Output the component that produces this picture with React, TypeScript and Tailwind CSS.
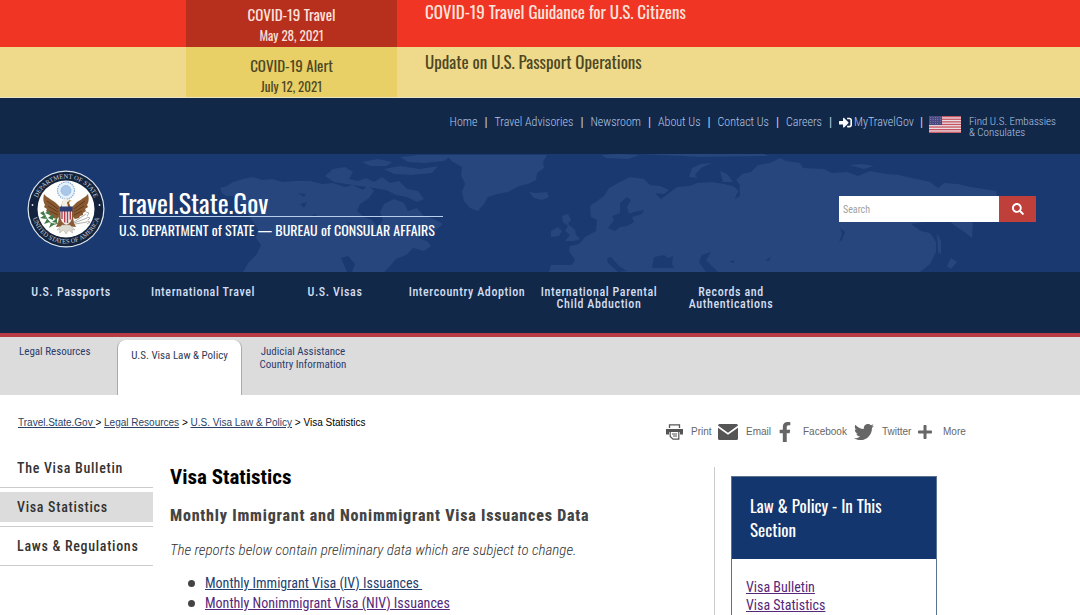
import clsx from "clsx"
import { FaSearch, FaSignInAlt, FaFacebookF, FaTwitter, FaPlus } from "react-icons/fa"

const alerts = [
  { label: "COVID-19 Travel", date: "May 28, 2021", title: "COVID-19 Travel Guidance for U.S. Citizens" },
  { label: "COVID-19 Alert", date: "July 12, 2021", title: "Update on U.S. Passport Operations" },
]

const utilityLinks = ["Home", "Travel Advisories", "Newsroom", "About Us", "Contact Us", "Careers"]

const mainNav = [
  "U.S. Passports",
  "International Travel",
  "U.S. Visas",
  "Intercountry Adoption",
  "International Parental Child Abduction",
  "Records and Authentications",
]

const sideNav = [
  { name: "The Visa Bulletin", active: false },
  { name: "Visa Statistics", active: true },
  { name: "Laws & Regulations", active: false },
]

const reports = [
  { name: "Monthly Immigrant Visa (IV) Issuances\u00a0", className: "text-[#24416f]" },
  { name: "Monthly Nonimmigrant Visa (NIV) Issuances", className: "text-[#55287a]" },
]

function Flag() {
  return (
    <svg viewBox="0 0 32 17" className="h-[17px] w-8" aria-hidden="true">
      <rect width="32" height="17" fill="#e9dfe6" />
      {[0, 1, 2, 3, 4, 5, 6].map((i) => (
        <rect key={i} y={i * 2.6} width="32" height="1.3" fill="#c8545f" />
      ))}
      <rect width="13" height="9" fill="#4a4a80" />
      {[0, 1, 2, 3].map((row) =>
        [0, 1, 2, 3, 4].map((col) => (
          <circle key={`${row}-${col}`} cx={1.6 + col * 2.4} cy={1.4 + row * 2.1} r="0.4" fill="#b9b8d6" />
        )),
      )}
    </svg>
  )
}

function Seal() {
  return (
    <svg viewBox="0 0 78 78" className="h-[78px] w-[78px] shrink-0" role="img" aria-label="Department of State seal">
      <defs>
        <path id="seal-top" d="M8.500 39a30.500 30.500 0 0 1 61 0" />
        <path id="seal-bottom" d="M4.500 39a34.500 34.500 0 0 0 69 0" />
      </defs>
      <circle cx="39" cy="39" r="38.500" fill="#dfe8ef" />
      <circle cx="39" cy="39" r="37.300" fill="#14233d" />
      <circle cx="39" cy="39" r="28.500" fill="#fdfdfb" />
      <g fill="#c9d1da" fontSize="6.500" fontFamily="Liberation Serif, serif">
        <text textAnchor="middle">
          <textPath href="#seal-top" startOffset="50%">DEPARTMENT OF STATE</textPath>
        </text>
        <text textAnchor="middle">
          <textPath href="#seal-bottom" startOffset="50%">UNITED STATES OF AMERICA</textPath>
        </text>
      </g>
      <circle cx="5.500" cy="35" r="0.900" fill="#dfe8ef" />
      <circle cx="72.500" cy="35" r="0.900" fill="#dfe8ef" />
      {/* glory */}
      <circle cx="39" cy="20.500" r="8.500" fill="#e8f1fa" stroke="#8bb2dc" strokeWidth="1.200" strokeDasharray="1.500 0.800" />
      <circle cx="39" cy="20.500" r="5" fill="#a9c8e8" stroke="#6f9fd2" strokeWidth="0.800" strokeDasharray="1 0.700" />
      {/* eagle */}
      <path
        d="M17 24C20 28 26 30 30 34L34 38L35 33C35 31 37 29 40 29L43 31L42 33L44 38L48 34C52 30 58 28 61 24C62 28 62 32 60 35L61 37L58 39L59 41L56 43L56 45L53 46L52 48L48 49L46 47L47 53L49 57L39 56L29 57L31 53L32 47L30 49L26 48L25 46L22 45L22 43L19 41L20 39L17 37L18 35C16 32 16 28 17 24Z"
        fill="#8a5a33"
      />
      <path d="M20 31l11 8M21 36l10 6M23 41l8 4M58 31l-11 8M57 36l-10 6M55 41l-8 4" stroke="#543217" strokeWidth="0.800" />
      <path d="M35 34c0-4 2-6 5-5l3 2-3 1 1 5h-6z" fill="#f3efe4" />
      <path d="M42 29.500l3 1.500-3 .6z" fill="#d7a236" />
      <path d="M33.500 38h11.500v9c0 4-3 7-5.700 8-2.800-1-5.800-4-5.800-8z" fill="#ece7e8" />
      <path d="M35 41v8M37.700 41v11.500M40.500 41v12M43.300 41v8.500" stroke="#b23b4b" strokeWidth="1.300" />
      <path d="M33 36.500h12.500v5h-12.500z" fill="#2c3d74" />
      {/* tail feathers */}
      <path d="M35 55l-5 5 3-.5-.5 3.500 4-3 2.500 4 2.500-4 4 3-.5-3.500 3 .5-5-5z" fill="#dedbd3" stroke="#aaa69c" strokeWidth="0.500" />
      {/* olive branch and arrows */}
      <path d="M31 53c-5 3-10 0-14-10" fill="none" stroke="#3f6f45" strokeWidth="1" />
      <path
        d="M17 41l-4 2 4 3zM18 45l-5 3 6 1zM20 49l-3 5 6-2zM24 53l-2 5 6-4zM18 43l5-3 0 5zM21 48l5-4 0 6zM25 52l5-4 0 5z"
        fill="#3f7a4a"
      />
      <path d="M47 52l12-8M47 53l13-5M48 54l12-2M59 42l3 1-2 3M60 47l3 1-2 2M60 51l3 1-3 2" stroke="#a9aaa8" strokeWidth="0.900" fill="none" />
    </svg>
  )
}

function WorldMap() {
  return (
    <svg
      viewBox="0 0 1080 118"
      preserveAspectRatio="xMidYMid slice"
      className="absolute inset-0 h-full w-full"
      aria-hidden="true"
    >
      <g fill="#27467d">
        {/* North America */}
        <path d="M220 34L227 32L233 28L243 25L253 23L262 26L272 25L283 28L296 27L310 27L322 30L333 29L345 33L353 31L363 36L368 31L374 37L369 44L360 50L357 57L364 63L372 66L378 73L383 66L380 58L384 50L394 45L404 49L408 57L417 54L424 62L434 65L443 70L436 76L425 79L418 84L427 87L431 92L424 97L413 94L406 101L396 105L390 112L384 118L352 118L355 110L348 102L341 104L347 118L243 118L249 108L257 100L261 91L256 84L258 75L252 66L246 57L241 48L234 42L226 42L222 39Z" />
        <path d="M325 22L333 15L345 13L353 18L349 25L358 27L366 24L374 28L382 23L390 29L399 27L407 35L418 37L424 45L417 48L407 43L396 41L386 36L374 34L360 32L346 30L334 28Z" />
        <path d="M362 8L378 5L392 8L386 12L370 12ZM400 3L418 1L452 1L444 7L424 9L408 8ZM384 15L400 12L420 15L438 12L432 19L412 21L394 20Z" />
        {/* Greenland */}
        <path d="M446 1L547 1L543 8L544 14L537 19L536 26L528 30L519 32L508 38L497 40L488 43L484 50L478 57L470 54L464 47L462 38L465 30L461 21L462 13L453 8Z" />
        <path d="M529 38L536 39L547 38L549 43L542 46L534 44ZM601 1L618 0L640 1L628 5L606 4ZM640 0L764 0L768 2L700 3Z" />
        {/* British Isles */}
        <path d="M562 62L568 60L571 66L568 70L575 76L576 81L580 85L574 87L565 87L570 81L565 77L568 72L563 68ZM551 77L558 73L562 77L559 82L551 83Z" />
        {/* Eurasia */}
        <path d="M549 118L551 111L572 111L575 106L569 97L570 92L579 90L585 83L596 77L597 66L591 63L590 52L597 47L604 42L609 34L618 29L630 23L644 25L650 31L660 32L669 36L664 40L655 39L661 45L669 39L677 33L690 32L697 29L712 28L724 30L733 32L739 37L740 31L736 26L742 20L751 18L758 11L770 9L780 4L786 7L800 9L803 14L824 15L832 19L847 18L858 22L870 17L886 20L899 21L912 24L930 28L938 34L944 29L958 30L970 33L984 35L996 37L997 42L988 46L990 62L973 67L972 84L963 77L954 71L946 65L926 68L911 70L921 77L930 79L936 88L936 98L930 110L920 118Z" />
        <path d="M689 23L692 14L701 10L712 9L701 14L695 21L698 24ZM723 28L720 17L727 20L733 28ZM849 11L862 10L874 12L864 15ZM937 79L941 87L941 100L938 98ZM951 104L957 108L951 115L947 112Z" />
      </g>
      {/* seas and lakes */}
      <g fill="#1b3a72">
        <path d="M620 49L627 43L631 46L627 53L629 60L634 58L644 56L642 60L632 63L634 68L627 72L620 73L615 77L608 74L614 66L612 62L620 59Z" />
        <path d="M607 104L611 103L619 112L627 117L618 118L608 109ZM654 103L664 101L668 104L673 102L672 110L674 114L652 114ZM702 101L711 98L706 106L712 112L718 118L706 118L699 108ZM729 108l5-2 0 3zM765 106l6-3-2 4zM840 74L845 78L842 86L839 88L842 80Z" />
        <path d="M300 50l7-2-3 6zM298 39l8 1-2 3zM312 61l5-1-3 4zM346 67l7 4-3 2zM736 41l4-6 0 7-5 3z" />
      </g>
    </svg>
  )
}

function PrintIcon() {
  return (
    <svg viewBox="0 0 17 16" className="h-4 w-[17px]" fill="none" stroke="#555" aria-hidden="true">
      <path d="M3.500 4V.8h10V4" strokeWidth="1.300" />
      <path d="M0 5h17v5.500h-3V8H3v2.500H0z" fill="#555" stroke="none" />
      <path d="M4.200 7.500h8.600v7.700H7L4.200 12.500z" strokeWidth="1.200" fill="#fff" />
      <path d="M6 10h5M7 12h4" strokeWidth="1" />
    </svg>
  )
}

function EmailIcon() {
  return (
    <svg viewBox="0 0 20 16" className="h-4 w-5" fill="#555" aria-hidden="true">
      <path d="M1.500 0h17A1.500 1.500 0 0 1 20 1.500L10 8.800 0 1.500A1.500 1.500 0 0 1 1.500 0z" />
      <path d="M0 3.800l10 7 10-7v10.700a1.500 1.500 0 0 1-1.500 1.500h-17A1.500 1.500 0 0 1 0 14.500z" />
    </svg>
  )
}

const shareLinks = [
  { name: "Print", icon: <PrintIcon />, className: "w-[52px] gap-2" },
  { name: "Email", icon: <EmailIcon />, className: "w-[59px] gap-2" },
  { name: "Facebook", icon: <FaFacebookF className="h-5 w-4" />, className: "w-[77px] gap-[10px]" },
  { name: "Twitter", icon: <FaTwitter className="h-5 w-5" />, className: "w-[63px] gap-2" },
  { name: "More", icon: <FaPlus className="h-4 w-4" />, className: "w-[52px] gap-[10px]" },
]

export default function App() {
  return (
    <div className="h-screen overflow-hidden bg-white font-['Roboto_Condensed','Liberation_Sans_Narrow',sans-serif] text-[#444]">
      {/* Alerts */}
      {alerts.map((alert, i) => (
        <div
          key={alert.label}
          className={clsx(
            "flex font-['Oswald','Roboto_Condensed','Liberation_Sans_Narrow',sans-serif]",
            i === 0 ? "bg-[#f03524] text-[#fbe3dc]" : "border-b border-[#e9e2c4] bg-[#efda8b] text-[#4d4723]",
          )}
        >
          <div
            className={clsx(
              "ml-[186px] w-[211px] text-center",
              i === 0 ? "bg-[#b72f1d] pt-[3px] pb-[2px]" : "bg-[#e8cf66] pt-[7px] pb-px",
            )}
          >
            <p className="text-[15px] leading-[23px]">{alert.label}</p>
            <p className="text-[13px] leading-[19px]">{alert.date}</p>
          </div>
          <a href="#" className={clsx("pl-7 text-[17px] leading-[23px]", i === 1 && "pt-[3px]")}>
            {alert.title}
          </a>
        </div>
      ))}

      {/* Utility links */}
      <div className="flex h-14 items-start justify-end bg-[#112849] pt-4 pr-6 text-xs leading-4 font-light text-[#b4c6e4]">
        {utilityLinks.map((name) => (
          <span key={name} className="flex">
            <a href="#">{name}</a>
            <span className="mx-[7px] font-bold">|</span>
          </span>
        ))}
        <a href="#" className="flex items-center gap-[2px]">
          <FaSignInAlt className="h-[13px] w-[13px] text-white" />
          MyTravelGov
        </a>
        <span className="mx-[6px] font-bold">|</span>
        <a href="#" className="flex items-start gap-2 pt-[2px] text-[11px] leading-[11px]">
          <Flag />
          <span>
            Find U.S. Embassies
            <br />& Consulates
          </span>
        </a>
      </div>

      {/* Banner */}
      <header className="relative flex h-[118px] items-center justify-between bg-[#1a3970] pr-11 pb-2 pl-[27px]">
        <WorldMap />
        <a href="#" className="relative flex items-center gap-[14px] font-['Oswald','Roboto_Condensed','Liberation_Sans_Narrow',sans-serif] text-white">
          <Seal />
          <span className="block w-[324px] pt-[14px]">
            <span className="block border-b border-[#b9cdec] text-[26px] leading-[26px]">Travel.State.Gov</span>
            <span className="block text-sm leading-[26px] whitespace-nowrap">
              U.S. DEPARTMENT of STATE — BUREAU of CONSULAR AFFAIRS
            </span>
          </span>
        </a>
        <form className="relative flex h-[26px]">
          <input
            aria-label="Search"
            placeholder="Search"
            className="w-40 bg-white px-1 text-[10px] text-[#333] placeholder:text-[#a0a0a0]"
          />
          <button type="button" aria-label="Submit search" className="flex w-[37px] items-center justify-center bg-[#bf3f3a] text-white">
            <FaSearch className="h-3 w-3" />
          </button>
        </form>
      </header>

      {/* Main navigation */}
      <nav className="flex h-[65px] border-b-4 border-[#b63b42] bg-[#112849] pt-[14px] pl-[5px]">
        {mainNav.map((name) => (
          <a key={name} href="#" className="w-[132px] px-1 text-center text-xs leading-3 font-medium tracking-wider text-[#d3def0]">
            {name}
          </a>
        ))}
      </nav>

      {/* Section tabs */}
      <nav className="flex h-[58px] bg-[#dcdcdc] text-[11px] leading-[13px] text-[#2d3b6b]">
        <a href="#" className="w-[117px] pt-2 pl-[19px]">Legal Resources</a>
        <a href="#" className="mt-[3px] w-[125px] rounded-t-lg border-x border-[#aaa] bg-white pt-[9px] text-center text-[#333a55]">
          U.S. Visa Law & Policy
        </a>
        <a href="#" className="w-[122px] px-3 pt-2 text-center">Judicial Assistance Country Information</a>
      </nav>

      {/* Breadcrumb and sharing */}
      <div className="flex h-[54px] items-start pt-[22px] pl-[18px] font-['Liberation_Sans',sans-serif] text-[10px] leading-3">
        <p className="w-[648px] text-black">
          <a href="#" className="text-[#2c3f66] underline">Travel.State.Gov </a>
          {" > "}
          <a href="#" className="text-[#2c3f66] underline">Legal Resources</a>
          {" > "}
          <a href="#" className="text-[#2c3f66] underline">U.S. Visa Law & Policy</a>
          {" > Visa Statistics"}
        </p>
        <div className="flex h-[30px] items-center text-[#666]">
          {shareLinks.map((link) => (
            <a key={link.name} href="#" className={clsx("flex items-center", link.className)}>
              {link.icon}
              {link.name}
            </a>
          ))}
        </div>
      </div>

      <div className="flex">
        {/* Side navigation */}
        <nav className="w-[153px] shrink-0 text-sm leading-5 font-medium tracking-wider text-[#333]">
          {sideNav.map((item) => (
            <div key={item.name} className="border-b border-[#ccc] py-1">
              <a href="#" className={clsx("block py-[5px] pl-[17px] whitespace-nowrap", item.active && "bg-[#dcdcdc]")}>
                {item.name}
              </a>
            </div>
          ))}
        </nav>

        {/* Content */}
        <main className="w-[561px] pt-[14px] pl-[17px]">
          <h1 className="text-[21px] leading-7 font-bold text-black">Visa Statistics</h1>
          <h2 className="mt-[13px] text-base leading-6 font-extrabold tracking-wider">
            Monthly Immigrant and Nonimmigrant Visa Issuances Data
          </h2>
          <p className="mt-3 text-[15px] leading-5 font-light text-[#333] italic">
            The reports below contain preliminary data which are subject to change.
          </p>
          <ul className="mt-[13px] pl-[18px] text-sm leading-5">
            {reports.map((report) => (
              <li key={report.name} className="flex items-center gap-[10px]">
                <span className="h-[7px] w-[7px] rounded-full bg-[#444]" />
                <a href="#" className={clsx("underline", report.className)}>{report.name}</a>
              </li>
            ))}
          </ul>
        </main>

        <aside className="mt-[18px] border-l border-[#ccc] pt-[9px] pl-4">
          <div className="w-[206px] border border-[#5b7290]">
            <h2 className="bg-[#13366f] px-[18px] py-[17px] font-['Oswald','Roboto_Condensed','Liberation_Sans_Narrow',sans-serif] text-[17px] leading-6 text-white">
              Law & Policy - In This Section
            </h2>
            <div className="flex flex-col items-start px-[14px] pt-[19px] pb-6 text-sm leading-[18px] text-[#55287a]">
              <a href="#" className="underline">Visa Bulletin</a>
              <a href="#" className="underline">Visa Statistics</a>
            </div>
          </div>
        </aside>
      </div>
    </div>
  )
}
